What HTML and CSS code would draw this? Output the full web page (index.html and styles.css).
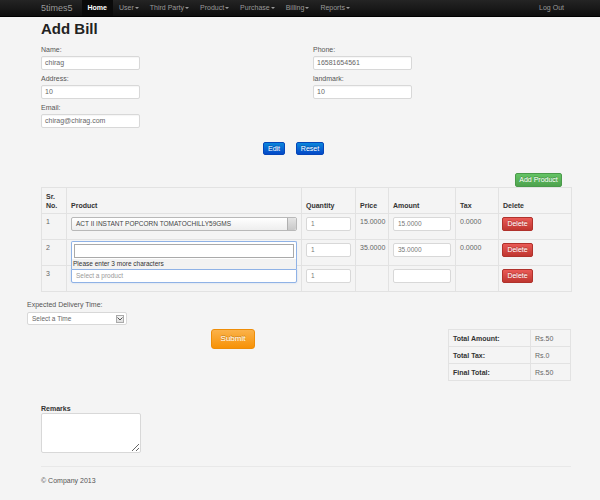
FILE: index.html
```html
<!DOCTYPE html>
<html>
<head>
<meta charset="utf-8">
<title>Add Bill</title>
<link rel="stylesheet" href="styles.css">
</head>
<body>
<div class="navbar">
  <div class="nav-inner">
    <span class="brand">5times5</span>
    <ul class="nav">
      <li class="active">Home</li>
      <li>User<b class="caret"></b></li>
      <li>Third Party<b class="caret"></b></li>
      <li>Product<b class="caret"></b></li>
      <li>Purchase<b class="caret"></b></li>
      <li>Billing<b class="caret"></b></li>
      <li>Reports<b class="caret"></b></li>
    </ul>
    <span class="logout">Log Out</span>
  </div>
</div>

<div class="container">
  <h1 class="title">Add Bill</h1>

  <div class="form-cols">
    <div class="form-col">
      <label class="lbl">Name:</label>
      <div class="field">chirag</div>
      <label class="lbl">Address:</label>
      <div class="field">10</div>
      <label class="lbl">Email:</label>
      <div class="field">chirag@chirag.com</div>
    </div>
    <div class="form-col">
      <label class="lbl">Phone:</label>
      <div class="field">16581654561</div>
      <label class="lbl">landmark:</label>
      <div class="field">10</div>
    </div>
  </div>

  <div class="actions">
    <span class="btn btn-primary">Edit</span>
    <span class="btn btn-primary">Reset</span>
  </div>

  <div class="add-row">
    <span class="btn btn-success">Add Product</span>
  </div>

  <table class="items">
    <colgroup>
      <col class="c-sr"><col class="c-prod"><col class="c-qty"><col class="c-price"><col class="c-amt"><col class="c-tax"><col class="c-del">
    </colgroup>
    <thead>
      <tr><th>Sr.<br>No.</th><th>Product</th><th>Quantity</th><th>Price</th><th>Amount</th><th>Tax</th><th>Delete</th></tr>
    </thead>
    <tbody>
      <tr>
        <td>1</td>
        <td><div class="s2"><span class="s2-text">ACT II INSTANT POPCORN TOMATOCHILLY59GMS</span><span class="s2-arrow"></span></div></td>
        <td><div class="cell-input">1</div></td>
        <td>15.0000</td>
        <td><div class="cell-input">15.0000</div></td>
        <td>0.0000</td>
        <td class="del-cell"><span class="btn btn-danger">Delete</span></td>
      </tr>
      <tr>
        <td>2</td>
        <td><div class="s2"><span class="s2-text"></span><span class="s2-arrow"></span></div></td>
        <td><div class="cell-input">1</div></td>
        <td>35.0000</td>
        <td><div class="cell-input">35.0000</div></td>
        <td>0.0000</td>
        <td class="del-cell"><span class="btn btn-danger">Delete</span></td>
      </tr>
      <tr>
        <td>3</td>
        <td class="prod-cell">
          <div class="s2-drop">
            <div class="s2-search"></div>
            <div class="s2-msg">Please enter 3 more characters</div>
          </div>
          <div class="s2 s2-active"><span class="s2-placeholder">Select a product</span></div>
        </td>
        <td><div class="cell-input">1</div></td>
        <td></td>
        <td><div class="cell-input"></div></td>
        <td></td>
        <td class="del-cell"><span class="btn btn-danger">Delete</span></td>
      </tr>
    </tbody>
  </table>

  <div class="delivery">
    <label class="lbl">Expected Delivery Time:</label>
    <div class="time-select"><span>Select a Time</span><span class="ts-arrow"><svg width="6" height="4" viewBox="0 0 6 4"><path d="M0.5 0.5 L3 3 L5.5 0.5" fill="none" stroke="#555" stroke-width="1"/></svg></span></div>
  </div>

  <div class="submit-row">
    <span class="btn btn-warning">Submit</span>
    <table class="totals">
      <tr><th>Total Amount:</th><td>Rs.50</td></tr>
      <tr><th>Total Tax:</th><td>Rs.0</td></tr>
      <tr><th>Final Total:</th><td>Rs.50</td></tr>
    </table>
  </div>

  <div class="remarks">
    <label class="lbl lbl-bold">Remarks</label>
    <textarea class="remarks-box"></textarea>
  </div>

  <hr class="sep">
  <footer class="footer">© Company 2013</footer>
</div>
</body>
</html>
```

FILE: styles.css
```css
* { box-sizing: border-box; }
html, body { margin: 0; padding: 0; }
body {
  background: #f4f4f4;
  font-family: "Liberation Sans", Arial, sans-serif;
  font-size: 7px;
  line-height: 9px;
  color: #333;
  width: 600px;
  height: 500px;
  overflow: hidden;
}

/* navbar */
.navbar {
  height: 17px;
  background: linear-gradient(#242424, #0e0e0e);
  border-bottom: 1px solid #000;
}
.nav-inner {
  display: flex;
  align-items: stretch;
  height: 16px;
  padding-left: 41px;
  width: 571px;
}
.brand {
  font-size: 9px;
  color: #999;
  line-height: 16px;
  margin-right: 9px;
}
.nav {
  display: flex;
  list-style: none;
  margin: 0;
  padding: 0;
}
.nav li {
  color: #999;
  line-height: 16px;
  padding: 0 5px 0 6px;
  display: flex;
  align-items: center;
}
.nav li.active {
  background: #0a0a0a;
  color: #fff;
  font-weight: bold;
  padding: 0 6px;
}
.caret {
  display: inline-block;
  width: 0; height: 0;
  border-left: 2px solid transparent;
  border-right: 2px solid transparent;
  border-top: 2px solid #999;
  margin-left: 1px;
}
.logout {
  margin-left: auto;
  color: #999;
  line-height: 16px;
  padding-right: 7px;
}

/* container */
.container {
  padding-left: 41px;
  width: 571px;
}
.title {
  font-size: 15px;
  line-height: 18px;
  margin: 3px 0 7px;
  font-weight: bold;
  color: #222;
}
.form-cols {
  display: flex;
}
.form-col {
  flex: 0 0 auto;
  width: 272px;
  display: flex;
  flex-direction: column;
  align-items: flex-start;
}
.form-col + .form-col { width: 258px; }
.lbl {
  display: block;
  color: #555;
  margin-bottom: 2px;
}
.lbl-bold { font-weight: bold; color: #333; margin-bottom: 0; }
.field {
  width: 99px;
  height: 14px;
  background: #fff;
  border: 1px solid #d8d8d8;
  border-radius: 2px;
  padding: 0 3px;
  line-height: 12px;
  color: #666;
  margin-bottom: 4px;
  box-shadow: inset 0 1px 1px rgba(0,0,0,0.04);
}

/* buttons */
.btn {
  display: inline-block;
  color: #fff;
  border-radius: 2px;
  text-align: center;
  text-shadow: 0 -1px 0 rgba(0,0,0,0.25);
  font-size: 7px;
}
.btn-primary {
  background: linear-gradient(#0a86dc, #0448c8);
  border: 1px solid #0446b8;
  height: 13px;
  line-height: 11px;
}
.btn-success {
  background: linear-gradient(#64c464, #4ea24e);
  border: 1px solid #4a9a4a;
  height: 14px;
  line-height: 12px;
  width: 47px;
}
.btn-danger {
  background: linear-gradient(#ea5a56, #bf3630);
  border: 1px solid #b0322c;
  height: 14px;
  line-height: 12px;
  width: 31px;
}
.btn-warning {
  background: linear-gradient(#fbb24a, #f79206);
  border: 1px solid #ee8d08;
  height: 20px;
  line-height: 18px;
  width: 44px;
  font-size: 8px;
  border-radius: 3px;
}
.actions {
  display: flex;
  gap: 11px;
  padding-left: 222px;
  margin-top: 10px;
}
.actions .btn:first-child { width: 22px; }
.actions .btn:last-child { width: 28px; }
.add-row {
  display: flex;
  justify-content: flex-end;
  padding-right: 9px;
  margin-top: 18px;
}

/* items table */
.items {
  width: 530px;
  table-layout: fixed;
  border-collapse: collapse;
  border: 1px solid #e0e0e0;
}
.c-sr { width: 25px; }
.c-prod { width: 235px; }
.c-qty { width: 54px; }
.c-price { width: 33px; }
.c-amt { width: 67px; }
.c-tax { width: 43px; }
.c-del { width: 73px; }
.items tr { height: 26px; }
.items th, .items td {
  border: 1px solid #e2e2e2;
  padding: 3px 4px;
  text-align: left;
}
.items th {
  vertical-align: bottom;
  font-weight: bold;
  color: #333;
}
.items td {
  vertical-align: top;
  color: #666;
  padding-top: 3px;
  padding-bottom: 0;
}
.items td.del-cell { padding-left: 3px; }
.items td .btn { display: block; }
.cell-input {
  width: 100%;
  height: 14px;
  background: #fff;
  border: 1px solid #d8d8d8;
  border-radius: 2px;
  padding: 0 4px;
  line-height: 12px;
  font-size: 6.5px;
  color: #777;
}
.s2 {
  position: relative;
  height: 14px;
  border: 1px solid #b8b8b8;
  border-radius: 2px;
  background: linear-gradient(#fff, #eee);
  padding: 0 12px 0 4px;
  line-height: 12px;
  font-size: 6.5px;
  color: #444;
  white-space: nowrap;
  overflow: hidden;
}
.s2-arrow {
  position: absolute;
  right: 0; top: 0; bottom: 0;
  width: 9px;
  background: linear-gradient(#e4e4e4, #c8c8c8);
  border-left: 1px solid #b0b0b0;
  border-radius: 0 2px 2px 0;
}
.prod-cell { position: relative; }
.s2-active {
  border-color: #8fb2e6;
  background: #fff;
  box-shadow: 0 0 2px rgba(82,138,230,0.3);
  border-radius: 0 0 2px 2px;
}
.s2-placeholder { color: #999; }
.s2-drop {
  position: absolute;
  left: 4px; right: 4px;
  top: -25px;
  height: 28px;
  background: #fff;
  border: 1px solid #8fb2e6;
  border-bottom: 0;
  border-radius: 2px 2px 0 0;
  padding: 2px 2px 0;
  z-index: 2;
}
.s2-search {
  height: 14px;
  border: 1px solid #aaa;
  background: #fff;
}
.s2-msg {
  background: #f2f2f2;
  color: #333;
  font-size: 6.5px;
  line-height: 10px;
  margin: 1px -2px 0;
  padding-left: 1px;
}

/* delivery */
.delivery {
  margin-left: -14px;
  margin-top: 8px;
}
.delivery .lbl { margin-bottom: 3px; }
.time-select {
  width: 100px;
  height: 13px;
  background: #fff;
  border: 1px solid #d8d8d8;
  border-radius: 2px;
  display: flex;
  align-items: center;
  justify-content: space-between;
  padding: 0 2px 0 4px;
  color: #666;
  font-size: 6.5px;
}
.ts-arrow {
  width: 8px; height: 8px;
  border: 1px solid #aaa;
  background: linear-gradient(#f4f4f4, #ddd);
  display: flex;
  align-items: center;
  justify-content: center;
}

/* submit + totals */
.submit-row {
  display: flex;
  align-items: flex-start;
  margin-top: 4px;
}
.submit-row .btn-warning { margin-left: 170px; }
.totals {
  margin-left: auto;
  width: 123px;
  border-collapse: collapse;
  border: 1px solid #e2e2e2;
}
.totals th, .totals td {
  border: 1px solid #e2e2e2;
  height: 17px;
  padding: 0 4px;
  text-align: left;
  vertical-align: middle;
}
.totals th { width: 82px; font-weight: bold; color: #333; }
.totals td { color: #666; }

/* remarks */
.remarks { margin-top: 23px; }
.remarks-box {
  display: block;
  width: 100px;
  height: 40px;
  background: #fff;
  border: 1px solid #d8d8d8;
  border-radius: 2px;
  margin: 0;
  padding: 2px;
  font-family: inherit;
  font-size: 7px;
}
.sep {
  border: 0;
  border-top: 1px solid #e8e8e8;
  margin: 13px 0 9px;
  width: 530px;
}
.footer {
  color: #555;
}
```
